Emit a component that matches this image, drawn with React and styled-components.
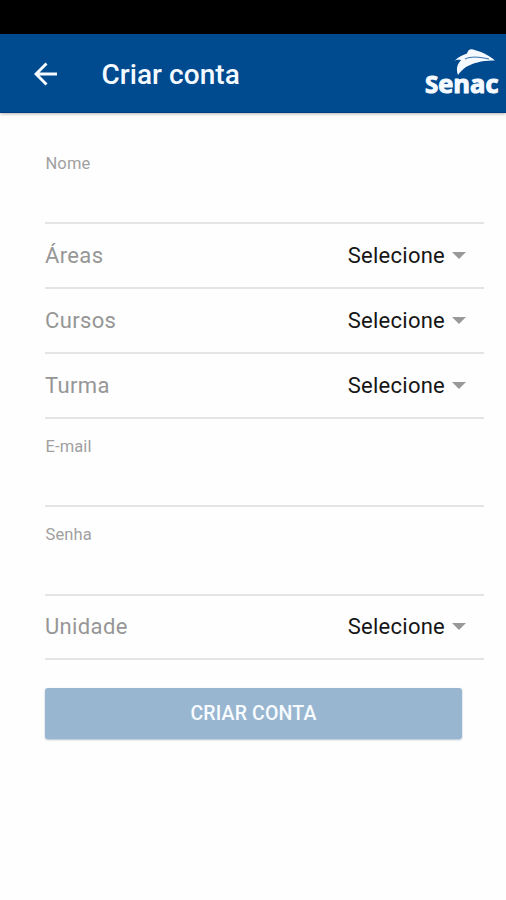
import React from 'react'

import styled, { createGlobalStyle } from 'styled-components'

const GlobalStyle = createGlobalStyle`
  * {
    box-sizing: border-box;
  }

  body {
    margin: 0;
    background: #fefefe;
    font-family: Roboto, sans-serif;
  }
`

const Screen = styled.div`
  height: 900px;
  overflow: hidden;
`

const StatusBar = styled.div`
  height: 34px;
  background: #000;
`

const Header = styled.header`
  display: flex;
  align-items: center;
  height: 79px;
  padding: 2px 6px 0 34px;
  background: #004a8f;
  border-bottom: 1px solid #003a80;
  box-shadow: 0 1px 3px rgba(0, 0, 0, 0.3);
`

const BackButton = styled.button`
  display: flex;
  padding: 0;
  border: 0;
  background: none;
`

const Title = styled.h1`
  flex: 1;
  margin: 0 0 0 43.5px;
  padding-top: 1px;
  color: #f4faff;
  font-size: 28px;
  font-weight: 500;
  letter-spacing: 0.05px;
  line-height: 36px;
`

const Form = styled.form`
  display: flex;
  flex-direction: column;
  padding: 22px 22px 0 45px;
`

const InputRow = styled.label`
  height: ${({ $height }) => $height}px;
  padding: ${({ $offset = 18 }) => $offset}px 0 0 0.5px;
  border-bottom: 2px solid #e4e4e4;
  color: #a0a0a0;
  font-size: 16.5px;
  letter-spacing: 0.1px;
  line-height: 20px;
`

const SelectRow = styled.div`
  display: flex;
  align-items: center;
  justify-content: space-between;
  height: ${({ $height }) => $height}px;
  padding-right: 18px;
  border-bottom: 2px solid #e4e4e4;
  color: #969696;
  font-size: 22px;
  letter-spacing: 0.35px;
`

const Value = styled.span`
  display: flex;
  align-items: center;
  gap: 7px;
  color: #161616;
  letter-spacing: 0.25px;
`

const Caret = styled.span`
  border: 7px solid transparent;
  border-top-color: #999;
  border-bottom: 0;
`

const Submit = styled.button`
  width: 417px;
  height: 51px;
  margin-top: 28px;
  border: 0;
  border-radius: 3px;
  background: #99b6d1;
  box-shadow: 0 1px 2px rgba(60, 100, 140, 0.4);
  color: #f8fcff;
  font-family: inherit;
  font-size: 19.5px;
  font-weight: 500;
  letter-spacing: 0.15px;
`

const ArrowIcon = () => (
  <svg width="24" height="24" viewBox="0 0 24 24" fill="none" stroke="#f4faff" strokeWidth="2.9">
    <path d="M23 12H3M12.5 1.5L2 12l10.5 10.5" />
  </svg>
)

const Logo = () => (
  <svg width="76" height="50" viewBox="0 0 76 50" fill="#f4faff">
    <path d="M30.5 12C34 8 39 6 43 4.5C44 1 46-0.5 49 0.5L57 3C62 5 67 8 71 11.5C59 11 49 14 42 18C39 20 36 23 34 26C32 21 32.5 16 37 11C34 10.5 32 11 30.5 12Z" />
    <path d="M41 10C47 7 56 8 65 10" fill="none" stroke="#004a8f" strokeWidth="0.8" />
    <text
      x="1"
      y="43.5"
      textLength="73.5"
      lengthAdjust="spacingAndGlyphs"
      fontFamily="'Open Sans', sans-serif"
      fontSize="25.5"
      fontWeight="700"
      stroke="#f4faff"
      strokeWidth="1.1"
      strokeLinejoin="round"
    >
      <tspan fontSize="24">S</tspan>enac
    </text>
  </svg>
)

const fields = [
  { label: 'Nome', type: 'input', height: 89, offset: 19 },
  { label: 'Áreas', type: 'select', height: 65 },
  { label: 'Cursos', type: 'select', height: 64.5 },
  { label: 'Turma', type: 'select', height: 65 },
  { label: 'E-mail', type: 'input', height: 88 },
  { label: 'Senha', type: 'input', height: 89 },
  { label: 'Unidade', type: 'select', height: 64.5 },
]

const App = () => {
  return (
    <Screen>
      <GlobalStyle />
      <StatusBar />
      <Header>
        <BackButton type="button">
          <ArrowIcon />
        </BackButton>
        <Title>Criar conta</Title>
        <Logo />
      </Header>
      <Form>
        {fields.map(({ label, type, height, offset }) =>
          type === 'input' ? (
            <InputRow key={label} $height={height} $offset={offset}>
              {label}
            </InputRow>
          ) : (
            <SelectRow key={label} $height={height}>
              {label}
              <Value>
                Selecione
                <Caret />
              </Value>
            </SelectRow>
          )
        )}
        <Submit type="button">CRIAR CONTA</Submit>
      </Form>
    </Screen>
  )
}

export default App
